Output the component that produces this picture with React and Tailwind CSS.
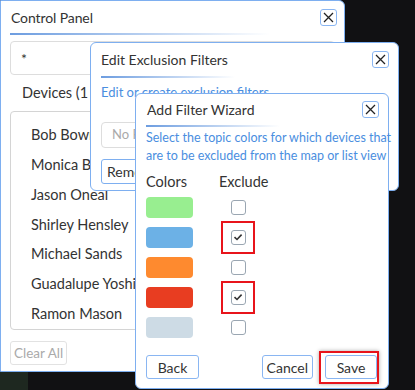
import React from "react";

function CloseBtn() {
    return (
        <button className="w-[17px] h-[17px] border border-[#8ab6f2] rounded-[3px] bg-white flex items-center justify-center">
            <svg width="11" height="11" viewBox="0 0 11 11">
                <path d="M1 1L10 10M10 1L1 10" stroke="#222" strokeWidth="1.3" />
            </svg>
        </button>
    );
}

function Checkbox({ checked }) {
    return (
        <div className="w-[15px] h-[15px] border border-[#9aa6b2] rounded-[3px] bg-white flex items-center justify-center">
            {checked && (
                <svg width="10" height="10" viewBox="0 0 10 10">
                    <path d="M1.5 5.2L4 7.5L8.6 2.6" stroke="#333" strokeWidth="1.6" fill="none" />
                </svg>
            )}
        </div>
    );
}

const devices = ["Bob Bowman", "Monica Burns", "Jason Oneal", "Shirley Hensley", "Michael Sands", "Guadalupe Yoshioka", "Ramon Mason"];

const colors = [
    { c: "bg-[#98ee90]", checked: false },
    { c: "bg-[#6cb1e6]", checked: true },
    { c: "bg-[#fe8a2f]", checked: false },
    { c: "bg-[#e83d21]", checked: true },
    { c: "bg-[#cddbe5]", checked: false },
];

export default function App() {
    return (
        <div className="relative w-[415px] h-[390px] bg-[#111113] overflow-hidden text-[#333]" style={{ fontFamily: "Lato, 'Noto Sans', sans-serif" }}>
            <div className="absolute left-0 top-[372px] w-[28px] h-[18px] bg-[#1e2820]" />

            {/* Control Panel */}
            <div className="absolute left-0 top-0 w-[345px] h-[372px] bg-white border border-[#7eaff0] rounded-tr-[6px] flex flex-col">
                <div className="flex items-center justify-between h-[32px] pl-[10px] pr-[7px]">
                    <span className="text-[14px] tracking-[-0.1px]">Control Panel</span>
                    <CloseBtn />
                </div>
                <div className="mx-[9px] flex flex-col">
                    <div className="h-[2px] w-[260px] bg-gradient-to-r from-[#6d9de0] to-transparent" />
                    <div className="mt-[6px] h-[34px] border border-[#ddd] rounded-[4px] flex items-center pl-[10px] text-[14px]">*</div>
                    <div className="h-[36px] flex items-center pl-[12px] text-[14.5px]">Devices (1 - 7)</div>
                    <div className="h-[219px] border border-[#d4d4d4] rounded-[4px] flex flex-col pt-[8px]">
                        {devices.map((d) => (
                            <div key={d} className="h-[30px] flex items-center pl-[20px] text-[14.5px]">{d}</div>
                        ))}
                    </div>
                    <div className="mt-[10px]">
                        <button className="h-[24px] px-[3px] border border-[#e2e2e2] rounded-[3px] text-[13.5px] text-[#aaa]">Clear All</button>
                    </div>
                </div>
            </div>

            {/* Edit Exclusion Filters */}
            <div className="absolute left-[90px] top-[42px] w-[309px] h-[149px] bg-white border border-[#7eaff0] rounded-[6px] flex flex-col">
                <div className="flex items-center justify-between h-[33px] pl-[10px] pr-[9px]">
                    <span className="text-[14px]">Edit Exclusion Filters</span>
                    <CloseBtn />
                </div>
                <div className="mx-[10px] flex flex-col">
                    <div className="h-[2px] w-[134px] bg-gradient-to-r from-[#6d9de0] to-transparent" />
                    <div className="h-[30px] flex items-center text-[13px] text-[#4a8ee0]">Edit or create exclusion filters</div>
                    <div className="mt-[14px] h-[26px] border border-[#ddd] rounded-[4px] flex items-center pl-[10px] text-[13px] text-[#aaa]">No Filter Selected</div>
                    <div className="mt-[11px]">
                        <button className="h-[25px] px-[5px] border border-[#7eaff0] rounded-[3px] text-[14px]">Remove</button>
                    </div>
                </div>
            </div>

            {/* Add Filter Wizard */}
            <div className="absolute left-[135px] top-[93px] w-[254px] h-[296px] bg-white border border-[#7eaff0] rounded-[6px] flex flex-col">
                <div className="flex items-center justify-between h-[31px] pl-[11px] pr-[9px]">
                    <span className="text-[14px]">Add Filter Wizard</span>
                    <CloseBtn />
                </div>
                <div className="mx-[10px] flex flex-col flex-1">
                    <div className="h-[2px] w-[134px] bg-gradient-to-r from-[#6d9de0] to-transparent" />
                    <div className="mt-[2px] text-[12.5px] leading-[18px] text-[#4a8ee0] whitespace-nowrap">
                        Select the topic colors for which devices that
                        <br />
                        are to be excluded from the map or list view
                    </div>
                    <div className="flex items-center h-[25px] mt-[4px] text-[14.5px]">
                        <span className="w-[73px]">Colors</span>
                        <span>Exclude</span>
                    </div>
                    <div className="flex flex-col -mt-[2px]">
                        {colors.map((row, i) => (
                            <div key={i} className="flex items-center h-[30px]">
                                <div className={`w-[47px] h-[21px] rounded-[4px] ${row.c}`} />
                                <div className="ml-[28px] w-[34px] h-[33px] flex items-center justify-center">
                                    {row.checked ? (
                                        <div className="w-[34px] h-[33px] border-2 border-[#e8141b] flex items-center justify-center">
                                            <Checkbox checked />
                                        </div>
                                    ) : (
                                        <Checkbox />
                                    )}
                                </div>
                            </div>
                        ))}
                    </div>
                    <div className="flex items-center justify-between mt-auto mb-[4px]">
                        <button className="h-[24px] w-[53px] border border-[#8ab6f2] rounded-[3px] text-[14px]">Back</button>
                        <div className="flex items-center gap-[6px]">
                            <button className="h-[24px] px-[4px] border border-[#8ab6f2] rounded-[3px] text-[14px]">Cancel</button>
                            <div className="pl-[4px] pt-[2px] pb-[3px] border-2 border-[#e8141b] shadow-[0_0_4px_rgba(0,0,0,0.35)] -mr-[1px]">
                                <button className="h-[24px] w-[52px] border border-[#8ab6f2] rounded-[3px] text-[14px]">Save</button>
                            </div>
                        </div>
                    </div>
                </div>
            </div>
        </div>
    );
}
